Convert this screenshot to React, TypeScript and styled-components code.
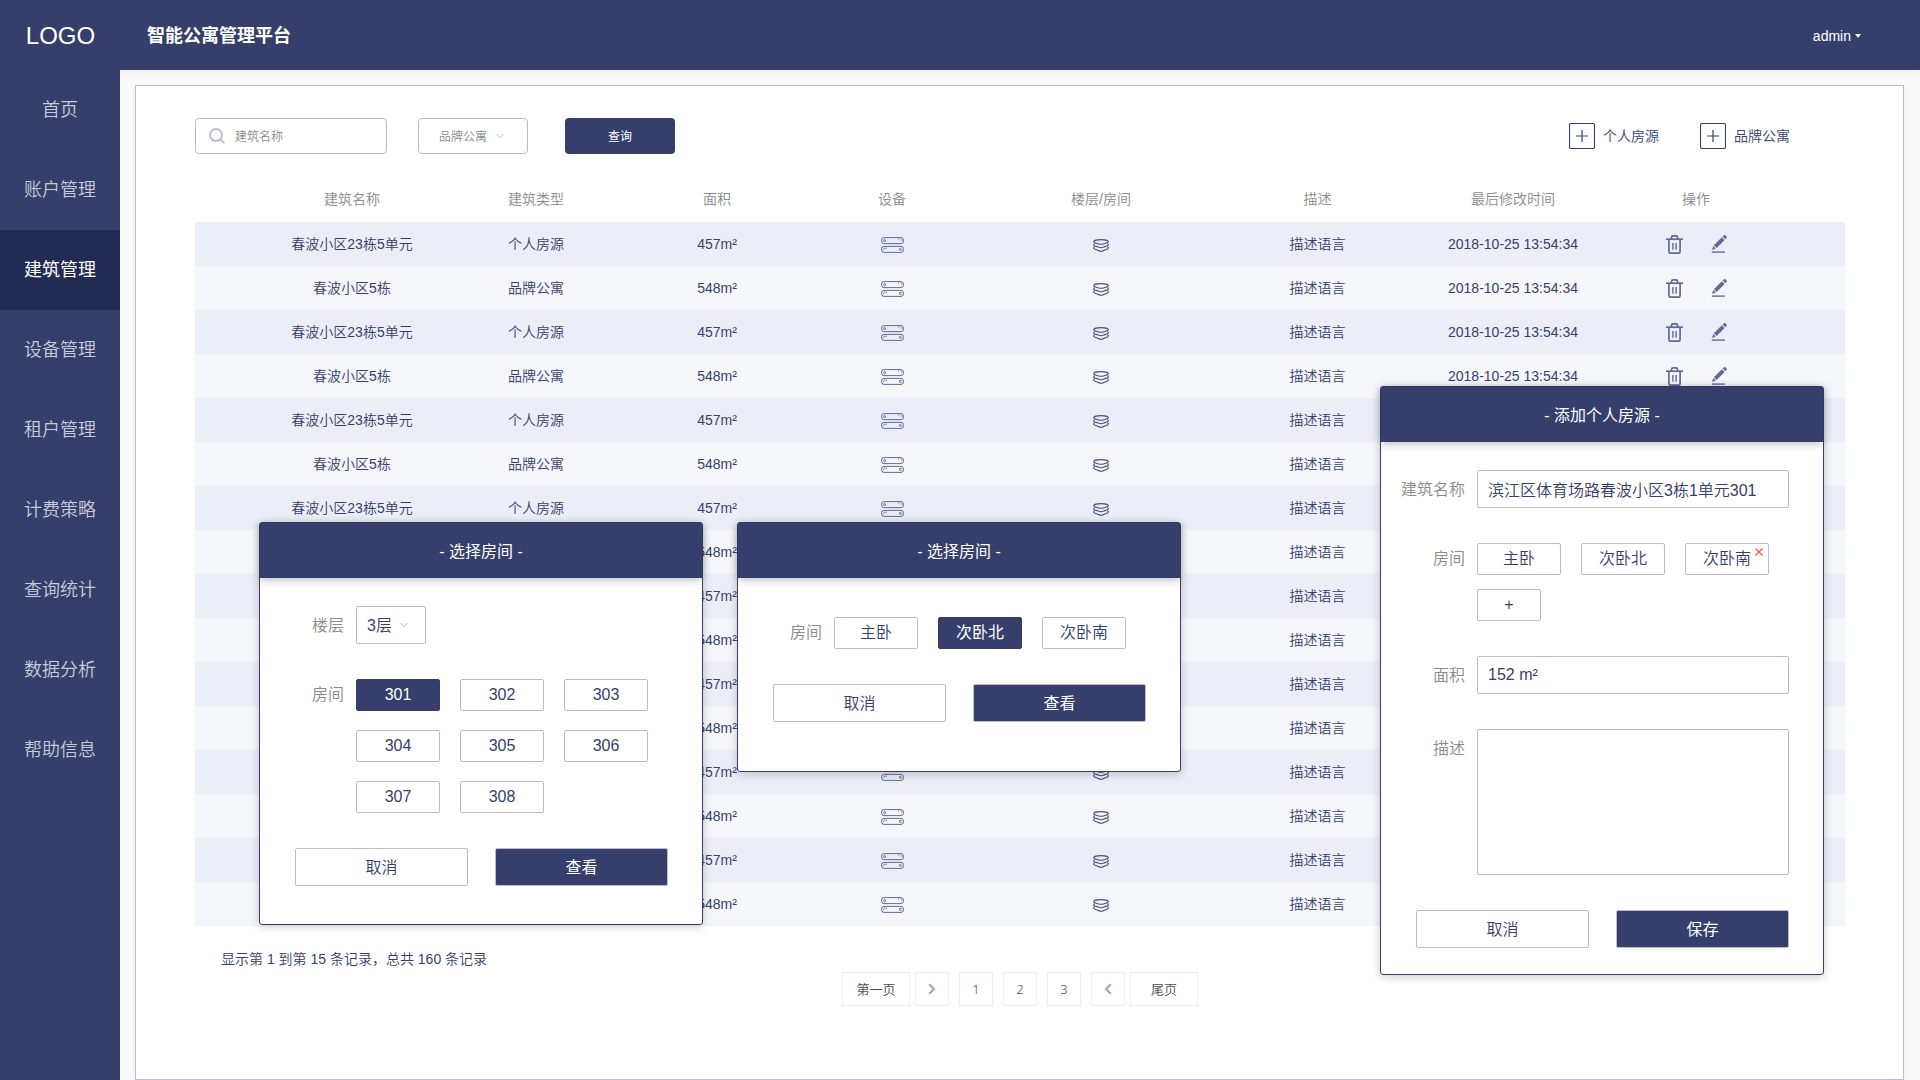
import React from "react";
import styled, { createGlobalStyle, css } from "styled-components";

const color = {
  navy: "#363f6b",
  navyDark: "#222b54",
  border: "#bbbace",
  label: "#8a8a8a",
  rowOdd: "#ebeef7",
  rowEven: "#f5f6fa",
};

const GlobalStyle = createGlobalStyle`
  *, *::before, *::after { box-sizing: border-box; }
  body {
    margin: 0;
    background: #fafafa;
    color: ${color.navy};
    font-family: "Liberation Sans", "Noto Sans CJK SC", sans-serif;
    font-size: 14px;
    font-weight: 350;
    line-height: 20px;
  }
  button, input, select, textarea {
    font: inherit;
    color: inherit;
    margin: 0;
    outline: none;
  }
  button { cursor: pointer; }
`;

/* ---------- page frame ---------- */

const Page = styled.div`
  position: relative;
  display: flex;
  flex-direction: column;
  min-height: 100vh;
`;

const Header = styled.header`
  position: relative;
  display: flex;
  align-items: center;
  height: 70px;
  padding: 2px 59px 0 0;
  background: ${color.navy};
  color: #fff;
  box-shadow: 0 2px 12px rgba(0, 0, 0, 0.06);
`;

const Logo = styled.div`
  width: 121px;
  text-align: center;
  font-size: 24px;
`;

const Title = styled.h1`
  margin: 0 auto 0 26px;
  font-size: 18px;
  font-weight: 700;
`;

const UserMenu = styled.button`
  display: flex;
  align-items: center;
  gap: 4px;
  padding: 0;
  border: 0;
  background: none;
`;

const Body = styled.div`
  display: flex;
  flex: 1;
`;

const Sidebar = styled.nav`
  position: relative;
  flex: 0 0 120px;
  background: ${color.navy};
`;

const NavLink = styled.a<{ $active?: boolean }>`
  display: flex;
  align-items: center;
  justify-content: center;
  height: 80px;
  font-size: 18px;
  font-weight: ${(p) => (p.$active ? 400 : 350)};
  text-decoration: none;
  color: ${(p) => (p.$active ? "#fff" : "#c9ccda")};
  background: ${(p) => (p.$active ? color.navyDark : "transparent")};
`;

const Main = styled.main`
  display: flex;
  flex: 1;
  min-width: 0;
  padding: 15px 16px 0 15px;
`;

const Panel = styled.section`
  flex: 1;
  min-width: 0;
  padding: 32px 58px 32px 59px;
  border: 1px solid ${color.border};
  background: #fff;
  box-shadow: 0 0 10px rgba(0, 0, 0, 0.03);
`;

/* ---------- toolbar ---------- */

const Toolbar = styled.form`
  display: flex;
  align-items: center;
  margin-bottom: 20px;
  font-size: 12px;
`;

const SearchBox = styled.label`
  display: flex;
  align-items: center;
  gap: 10px;
  width: 192px;
  height: 36px;
  margin-right: 31px;
  padding: 0 13px;
  border: 1px solid ${color.border};
  border-radius: 4px;

  input {
    flex: 1;
    min-width: 0;
    padding: 2px 0 0;
    border: 0;
    background: none;
  }
  input::placeholder {
    color: ${color.label};
    opacity: 1;
  }
`;

const SelectBox = styled.div<{ $compact?: boolean }>`
  position: relative;
  width: ${(p) => (p.$compact ? "70px" : "110px")};
  height: ${(p) => (p.$compact ? "38px" : "36px")};

  select {
    width: 100%;
    height: 100%;
    padding: 2px 0 0 ${(p) => (p.$compact ? "10px" : "20px")};
    appearance: none;
    border: 1px solid ${color.border};
    border-radius: ${(p) => (p.$compact ? "2px" : "4px")};
    background: #fff;
    color: ${(p) => (p.$compact ? color.navy : color.label)};
  }
  svg {
    position: absolute;
    top: 50%;
    right: ${(p) => (p.$compact ? "18px" : "24px")};
    margin-top: -3px;
    pointer-events: none;
  }
`;

const QueryButton = styled.button`
  width: 110px;
  height: 36px;
  margin-left: 37px;
  padding: 2px 0 0;
  border: 0;
  border-radius: 4px;
  background: ${color.navy};
  color: #fff;
  font-weight: 400;
`;

const AddGroup = styled.div`
  display: flex;
  gap: 41px;
  margin: 0 55px 0 auto;
  font-size: 14px;
`;

const AddButton = styled.button`
  display: flex;
  align-items: center;
  gap: 8px;
  padding: 0;
  border: 0;
  background: none;
`;

/* ---------- table ---------- */

const Table = styled.table`
  width: 100%;
  table-layout: fixed;
  border-collapse: collapse;
  text-align: center;

  th {
    height: 48px;
    padding: 1px 0 0;
    font-weight: 350;
    color: ${color.label};
  }
  td {
    height: 44px;
    padding: 0;
  }
  th:first-child,
  td:first-child {
    padding-left: 65px;
  }
  th:last-child,
  td:last-child {
    padding-right: 68px;
  }
  tbody tr {
    background: ${color.rowOdd};
  }
  tbody tr:nth-child(even) {
    background: ${color.rowEven};
  }
`;

const IconButton = styled.button`
  display: inline-flex;
  padding: 0;
  border: 0;
  background: none;
  vertical-align: middle;
`;

const RowActions = styled.div`
  display: flex;
  justify-content: center;
  gap: 28px;
`;

const Summary = styled.p`
  margin: 23px 26px 3px;
`;

const Pagination = styled.nav`
  display: flex;
  justify-content: center;
  gap: 5px;
  font-family: "Noto Sans", "Noto Sans CJK SC", sans-serif;
  font-size: 13px;
  color: #4b4b57;
`;

const PageNumbers = styled.div`
  display: flex;
  gap: 10px;
`;

const PageButton = styled.button<{ $wide?: boolean }>`
  display: flex;
  align-items: center;
  justify-content: center;
  width: ${(p) => (p.$wide ? "68px" : "34px")};
  height: 34px;
  padding: 0;
  border: 1px solid #eeeeee;
  background: #fff;
`;

/* ---------- dialogs ---------- */

const DialogBox = styled.div`
  position: absolute;
  width: 444px;
  border: 1px solid ${color.navy};
  border-radius: 3px;
  background: #fff;
  box-shadow: 0 2px 10px rgba(0, 0, 0, 0.2);
  font-size: 16px;
`;

const FloorDialog = styled(DialogBox)`
  top: 522px;
  left: 259px;
`;

const RoomDialog = styled(DialogBox)`
  top: 522px;
  left: 737px;
`;

const AddDialog = styled(DialogBox)`
  top: 386px;
  right: 96px;
`;

const DialogTitle = styled.h2`
  display: flex;
  align-items: center;
  justify-content: center;
  height: 55px;
  margin: 0;
  padding-top: 2px;
  background: ${color.navy};
  color: #fff;
  font-size: 16px;
  font-weight: 400;
  box-shadow: 0 2px 8px rgba(0, 0, 0, 0.25);
`;

const DialogForm = styled.form<{ $top: number; $bottom: number }>`
  display: flex;
  flex-direction: column;
  gap: 35px;
  padding: ${(p) => p.$top}px 34px ${(p) => p.$bottom}px 20px;
`;

const Field = styled.div`
  display: grid;
  grid-template-columns: 64px 1fr;
  column-gap: 12px;
`;

const labelText = css<{ $short?: boolean }>`
  text-align: right;
  line-height: ${(p) => (p.$short ? "32px" : "40px")};
  height: 32px;
  color: ${color.label};
`;

const FieldLabel = styled.label`
  ${labelText}
`;

const GroupLabel = styled.span<{ $short?: boolean }>`
  ${labelText}
`;

const boxed = css`
  width: 100%;
  padding: 0 10px;
  border: 1px solid ${color.border};
  border-radius: 2px;
  background: #fff;
`;

const TextInput = styled.input`
  ${boxed}
  height: 38px;
`;

const TextArea = styled.textarea`
  ${boxed}
  display: block;
  height: 146px;
  padding: 8px 10px;
  resize: none;
`;

const Chips = styled.div<{ $rowGap?: number }>`
  display: flex;
  flex-wrap: wrap;
  gap: ${(p) => p.$rowGap ?? 19}px 20px;
`;

const Chip = styled.button<{ $selected?: boolean; $narrow?: boolean }>`
  width: ${(p) => (p.$narrow ? "64px" : "84px")};
  height: 32px;
  padding: 0;
  border: 1px solid ${(p) => (p.$selected ? color.navy : color.border)};
  border-radius: 2px;
  background: ${(p) => (p.$selected ? color.navy : "#fff")};
  color: ${(p) => (p.$selected ? "#fff" : color.navy)};
  font-weight: ${(p) => (p.$selected ? 400 : 350)};
`;

const RemovableChip = styled.div`
  position: relative;
  display: flex;
`;

const RemoveButton = styled.button`
  position: absolute;
  top: 5px;
  right: 6px;
  display: flex;
  padding: 0;
  border: 0;
  background: none;
`;

const Actions = styled.div`
  display: flex;
  gap: 27px;
  margin-left: 15px;
`;

const ActionButton = styled.button<{ $primary?: boolean }>`
  flex: 1;
  height: 38px;
  padding: 2px 0 0;
  border: 1px solid ${color.border};
  border-radius: 2px;
  background: ${(p) => (p.$primary ? color.navy : "#fff")};
  color: ${(p) => (p.$primary ? "#fff" : color.navy)};
  font-weight: ${(p) => (p.$primary ? 400 : 350)};
`;

/* ---------- icons ---------- */

const SearchIcon = () => (
  <svg width="16" height="16" viewBox="0 0 16 16" fill="none" stroke={color.border} strokeWidth="1.8">
    <circle cx="7" cy="7" r="6" />
    <path d="M11.2 11.2 15.4 15.4" />
  </svg>
);

const ChevronDown = () => (
  <svg width="8" height="6" viewBox="0 0 8 6" fill="none" stroke={color.border} strokeWidth="1">
    <path d="M.5 1 4 4.6 7.5 1" />
  </svg>
);

const CaretDown = () => (
  <svg width="6" height="4" viewBox="0 0 6 4" fill="#fff">
    <path d="M0 0h6L3 4z" />
  </svg>
);

const PlusBox = () => (
  <svg width="26" height="26" viewBox="0 0 26 26" fill="none" stroke={color.navy}>
    <rect x=".5" y=".5" width="25" height="25" rx="1.5" strokeWidth="1.1" />
    <path d="M7 13h12M13 7v12" strokeWidth="1.2" />
  </svg>
);

const DeviceIcon = () => (
  <svg width="23" height="16" viewBox="0 0 23 16" fill="none" stroke="#616a93" strokeWidth="1">
    <rect x=".6" y=".6" width="21.8" height="6" rx="2.4" />
    <circle cx="3.6" cy="3.6" r="1" />
    <path d="M17.6 1v1.4M19.4 2.2c.9 0 1.3.5 1.3 1.6" strokeWidth=".8" />
    <rect x=".6" y="9.4" width="21.8" height="6" rx="2.4" />
    <circle cx="19.4" cy="12.4" r="1" />
    <path d="M2.4 13c0-1.3.5-1.8 1.8-1.8h1.8" strokeWidth=".8" />
  </svg>
);

const LayersIcon = () => (
  <svg width="16" height="13" viewBox="0 0 16 13" fill="none" stroke="#454e7c" strokeWidth="1.1" strokeLinejoin="round">
    <path d="M.6 2.6C1 1.600 4.500.6 8 .6s7 1 7.400 2c0 .8-1.200 1.200-2.800 1.600C11 4.600 9.800 5.300 8 5.300S5 4.600 3.400 4.200C1.800 3.800.6 3.400.6 2.600z" />
    <path d="M1.800 4.400C.9 4.900.6 5.300.6 5.900c0 .8 1.200 1.100 2.800 1.500C5 7.800 6.200 8.700 8 8.700s3-.9 4.600-1.300c1.600-.4 2.800-.7 2.800-1.500 0-.6-.3-1-1.200-1.500" />
    <path d="M1.800 7.600C.9 8.100.6 8.500.6 9.100c0 .8 1.200 1.200 2.800 1.600C5 11.100 6.200 12.300 8 12.300s3-1.200 4.600-1.600c1.600-.4 2.800-.8 2.800-1.600 0-.6-.3-1-1.200-1.500" />
  </svg>
);

const TrashIcon = () => (
  <svg width="17" height="19" viewBox="0 0 17 19" fill="none" stroke="#616a93" strokeWidth="1.7">
    <path d="M0 4.2h17" />
    <path d="M5.4 4V2.8C5.4 1.5 6.2.8 7.3.8h2.4c1.1 0 1.9.7 1.9 2V4" />
    <path d="M2.9 4.5v12c0 1.1.6 1.7 1.7 1.7h7.8c1.1 0 1.7-.6 1.7-1.7v-12" />
    <path d="M6.9 8v6.8M10.1 8v6.8" strokeWidth="1.4" />
  </svg>
);

const PencilIcon = () => (
  <svg width="16" height="18" viewBox="0 0 16 18" fill="#616a93">
    <path d="M12.8.4c.5-.5 1.2-.5 1.7 0l1 1c.5.5.5 1.2 0 1.7l-1.2 1.2L11.6 1.6z" />
    <path d="M10.9 2.3 13.6 5 5.6 12.9 2.9 10.2z" />
    <path d="M2.3 11 4.9 13.5 1 15z" />
    <path d="M.8 16.4h13v1.4H.8z" />
  </svg>
);

const PageChevron = ({ left }: { left?: boolean }) => (
  <svg width="8" height="12" viewBox="0 0 8 12" fill="none" stroke="#a1a8b3" strokeWidth="2.2">
    <path d={left ? "M6.8 1.2 2 6l4.8 4.8" : "M1.2 1.2 6 6l-4.8 4.8"} />
  </svg>
);

const CrossIcon = () => (
  <svg width="8" height="8" viewBox="0 0 8 8" fill="none" stroke="#f2544c" strokeWidth="1.2">
    <path d="M.5.5l7 7M7.5.5l-7 7" />
  </svg>
);

/* ---------- data ---------- */

const navItems = [
  "首页",
  "账户管理",
  "建筑管理",
  "设备管理",
  "租户管理",
  "计费策略",
  "查询统计",
  "数据分析",
  "帮助信息",
];

const columns = [
  { name: "建筑名称", width: 249 },
  { name: "建筑类型", width: 184 },
  { name: "面积", width: 178 },
  { name: "设备", width: 172 },
  { name: "楼层/房间", width: 246 },
  { name: "描述", width: 187 },
  { name: "最后修改时间", width: 204 },
  { name: "操作", width: 230 },
];

const buildings = Array.from({ length: 16 }, (_, i) =>
  i % 2 === 0
    ? { id: i, name: "春波小区23栋5单元", type: "个人房源", area: "457m²" }
    : { id: i, name: "春波小区5栋", type: "品牌公寓", area: "548m²" }
);

const floorRooms = ["301", "302", "303", "304", "305", "306", "307", "308"];
const bedrooms = ["主卧", "次卧北", "次卧南"];

/* ---------- parts ---------- */

const DialogActions = ({ confirm }: { confirm: string }) => (
  <Actions>
    <ActionButton type="button">取消</ActionButton>
    <ActionButton type="button" $primary>
      {confirm}
    </ActionButton>
  </Actions>
);

const RoomChips = ({ rooms, selected }: { rooms: string[]; selected: string }) => (
  <Field role="group" aria-label="房间">
    <GroupLabel $short>房间</GroupLabel>
    <Chips>
      {rooms.map((room) => (
        <Chip key={room} type="button" $selected={room === selected} aria-pressed={room === selected}>
          {room}
        </Chip>
      ))}
    </Chips>
  </Field>
);

const BuildingTable = () => (
  <Table>
    <colgroup>
      {columns.map((c) => (
        <col key={c.name} style={{ width: c.width }} />
      ))}
    </colgroup>
    <thead>
      <tr>
        {columns.map((c) => (
          <th key={c.name} scope="col">
            {c.name}
          </th>
        ))}
      </tr>
    </thead>
    <tbody>
      {buildings.map((b) => (
        <tr key={b.id}>
          <td>{b.name}</td>
          <td>{b.type}</td>
          <td>{b.area}</td>
          <td>
            <IconButton aria-label="设备">
              <DeviceIcon />
            </IconButton>
          </td>
          <td>
            <IconButton aria-label="楼层/房间">
              <LayersIcon />
            </IconButton>
          </td>
          <td>描述语言</td>
          <td>2018-10-25 13:54:34</td>
          <td>
            <RowActions>
              <IconButton aria-label="删除">
                <TrashIcon />
              </IconButton>
              <IconButton aria-label="编辑">
                <PencilIcon />
              </IconButton>
            </RowActions>
          </td>
        </tr>
      ))}
    </tbody>
  </Table>
);

export default function App() {
  return (
    <Page>
      <GlobalStyle />
      <Header>
        <Logo>LOGO</Logo>
        <Title>智能公寓管理平台</Title>
        <UserMenu type="button">
          admin
          <CaretDown />
        </UserMenu>
      </Header>

      <Body>
        <Sidebar>
          {navItems.map((item) => (
            <NavLink key={item} href="#" $active={item === "建筑管理"}>
              {item}
            </NavLink>
          ))}
        </Sidebar>

        <Main>
          <Panel>
            <Toolbar>
              <SearchBox>
                <SearchIcon />
                <input type="text" placeholder="建筑名称" aria-label="建筑名称" />
              </SearchBox>
              <SelectBox>
                <select aria-label="建筑类型" defaultValue="品牌公寓">
                  <option>品牌公寓</option>
                  <option>个人房源</option>
                </select>
                <ChevronDown />
              </SelectBox>
              <QueryButton type="button">查询</QueryButton>
              <AddGroup>
                <AddButton type="button">
                  <PlusBox />
                  个人房源
                </AddButton>
                <AddButton type="button">
                  <PlusBox />
                  品牌公寓
                </AddButton>
              </AddGroup>
            </Toolbar>

            <BuildingTable />

            <Summary>显示第 1 到第 15 条记录，总共 160 条记录</Summary>
            <Pagination aria-label="分页">
              <PageButton $wide>第一页</PageButton>
              <PageNumbers>
                <PageButton aria-label="下一页">
                  <PageChevron />
                </PageButton>
                <PageButton>1</PageButton>
                <PageButton>2</PageButton>
                <PageButton>3</PageButton>
                <PageButton aria-label="上一页">
                  <PageChevron left />
                </PageButton>
              </PageNumbers>
              <PageButton $wide>尾页</PageButton>
            </Pagination>
          </Panel>
        </Main>
      </Body>

      <FloorDialog role="dialog" aria-labelledby="floor-title">
        <DialogTitle id="floor-title">- 选择房间 -</DialogTitle>
        <DialogForm $top={28} $bottom={38}>
          <Field>
            <FieldLabel htmlFor="floor">楼层</FieldLabel>
            <SelectBox $compact>
              <select id="floor" defaultValue="3层">
                <option>1层</option>
                <option>2层</option>
                <option>3层</option>
              </select>
              <ChevronDown />
            </SelectBox>
          </Field>
          <RoomChips rooms={floorRooms} selected="301" />
          <DialogActions confirm="查看" />
        </DialogForm>
      </FloorDialog>

      <RoomDialog role="dialog" aria-labelledby="room-title">
        <DialogTitle id="room-title">- 选择房间 -</DialogTitle>
        <DialogForm $top={39} $bottom={49}>
          <RoomChips rooms={bedrooms} selected="次卧北" />
          <DialogActions confirm="查看" />
        </DialogForm>
      </RoomDialog>

      <AddDialog role="dialog" aria-labelledby="add-title">
        <DialogTitle id="add-title">- 添加个人房源 -</DialogTitle>
        <DialogForm $top={28} $bottom={26}>
          <Field>
            <FieldLabel htmlFor="building">建筑名称</FieldLabel>
            <TextInput id="building" defaultValue="滨江区体育场路春波小区3栋1单元301" />
          </Field>
          <Field role="group" aria-label="房间">
            <GroupLabel $short>房间</GroupLabel>
            <Chips $rowGap={14}>
              <Chip type="button">主卧</Chip>
              <Chip type="button">次卧北</Chip>
              <RemovableChip>
                <Chip type="button">次卧南</Chip>
                <RemoveButton type="button" aria-label="移除次卧南">
                  <CrossIcon />
                </RemoveButton>
              </RemovableChip>
              <Chip type="button" $narrow aria-label="添加房间">
                +
              </Chip>
            </Chips>
          </Field>
          <Field>
            <FieldLabel htmlFor="area">面积</FieldLabel>
            <TextInput id="area" defaultValue="152 m²" />
          </Field>
          <Field>
            <FieldLabel htmlFor="description">描述</FieldLabel>
            <TextArea id="description" />
          </Field>
          <DialogActions confirm="保存" />
        </DialogForm>
      </AddDialog>
    </Page>
  );
}
